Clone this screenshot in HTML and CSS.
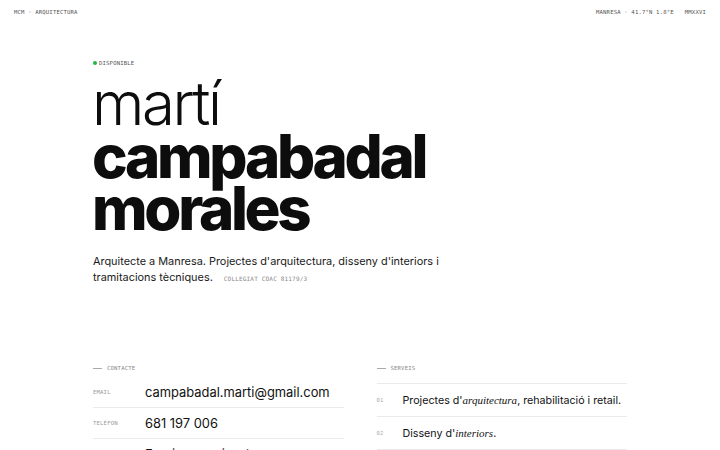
FILE: index.html
```html
<!DOCTYPE html>
<html lang="ca">
<head>
<meta charset="utf-8">
<title>MCM · Arquitectura</title>
<link rel="stylesheet" href="styles.css">
</head>
<body>
<header class="topbar">
  <span class="mono">MCM · ARQUITECTURA</span>
  <span class="topbar-right"><span class="mono">MANRESA · 41.7°N 1.8°E</span><span class="mono">MMXXVI</span></span>
</header>
<main class="wrap">
  <section class="hero">
    <div class="status mono"><span class="dot"></span>DISPONIBLE</div>
    <h1 class="name">
      <span class="light">martí</span>
      <span class="bold">campabadal</span>
      <span class="bold">morales</span>
    </h1>
    <p class="lead">Arquitecte a Manresa. Projectes d'arquitectura, disseny d'interiors i tramitacions tècniques. <span class="mono coac">COLLEGIAT COAC 81179/3</span></p>
  </section>
  <section class="cols">
    <div class="col">
      <div class="label mono"><span class="rule"></span>CONTACTE</div>
      <div class="crows">
        <div class="crow"><span class="mono key">EMAIL</span><span class="val">campabadal.marti@gmail.com</span></div>
        <div class="crow"><span class="mono key">TELÉFON</span><span class="val">681 197 006</span></div>
        <div class="crow"><span class="mono key">MISSATGE</span><span class="val">Escriu-me missatge →</span></div>
      </div>
    </div>
    <div class="col">
      <div class="label mono"><span class="rule"></span>SERVEIS</div>
      <div class="srows">
        <div class="srow"><span class="mono num">01</span><span class="sval">Projectes d'<em>arquitectura</em>, rehabilitació i retail.</span></div>
        <div class="srow"><span class="mono num">02</span><span class="sval">Disseny d'<em>interiors</em>.</span></div>
        <div class="srow"><span class="mono num">03</span><span class="sval">Tramitacions <em>tècniques</em>.</span></div>
      </div>
    </div>
  </section>
</main>
</body>
</html>
```
FILE: styles.css
```css
* { box-sizing: border-box; margin: 0; padding: 0; }
html, body { background: #fff; }
body {
  font-family: Inter, "Noto Sans", sans-serif;
  color: #111;
  overflow: hidden;
}
.mono {
  font-family: "DejaVu Sans Mono", "Liberation Mono", monospace;
  font-size: 5.6px;
  letter-spacing: 0.03em;
  color: #666;
  text-transform: uppercase;
  white-space: nowrap;
}
.topbar {
  display: flex;
  justify-content: space-between;
  align-items: center;
  height: 24px;
  padding: 0 14px;
}
.topbar .mono { color: #555; }
.topbar-right { display: flex; gap: 11px; }
.wrap {
  width: 534px;
  margin: 0 auto;
}
.hero { padding-top: 35px; }
.status {
  display: flex;
  align-items: center;
  gap: 2px;
  height: 8px;
  color: #555;
}
.dot {
  width: 4px; height: 4px;
  border-radius: 50%;
  background: #1fb84a;
}
.name {
  display: flex;
  flex-direction: column;
  margin-top: 9px;
  font-size: 60px;
  color: #0d0d0d;
}
.light { font-weight: 300; line-height: 54px; letter-spacing: -0.04em; margin-left: -1px; }
.bold { font-weight: 800; line-height: 52px; letter-spacing: -0.055em; margin-left: -1px; }
.lead {
  margin-top: 19px;
  font-size: 10.9px;
  line-height: 16px;
  width: 360px;
  color: #1a1a1a;
}
.coac { font-size: 6px; margin-left: 8px; color: #888; }
.cols {
  display: grid;
  grid-template-columns: minmax(0, 1fr) minmax(0, 1fr);
  column-gap: 33px;
  margin-top: 76px;
}
.label {
  display: flex;
  align-items: center;
  gap: 5px;
  height: 10px;
  color: #888;
}
.rule { width: 9px; height: 1px; background: #aaa; }
.crows { margin-top: 4px; }
.crow {
  display: flex;
  align-items: center;
  height: 31px;
  border-bottom: 1px solid #ebebeb;
}
.key { width: 52px; flex: none; color: #999; }
.val { font-size: 12.9px; font-weight: 400; white-space: nowrap; }
.srows { margin-top: 10px; border-top: 1px solid #ebebeb; }
.srow {
  display: flex;
  align-items: center;
  height: 33px;
  border-bottom: 1px solid #ebebeb;
}
.num { width: 26px; flex: none; color: #aaa; }
.sval { font-size: 10.7px; white-space: nowrap; }
.sval em { font-family: "Liberation Serif", serif; font-style: italic; font-size: 11px; }
```
